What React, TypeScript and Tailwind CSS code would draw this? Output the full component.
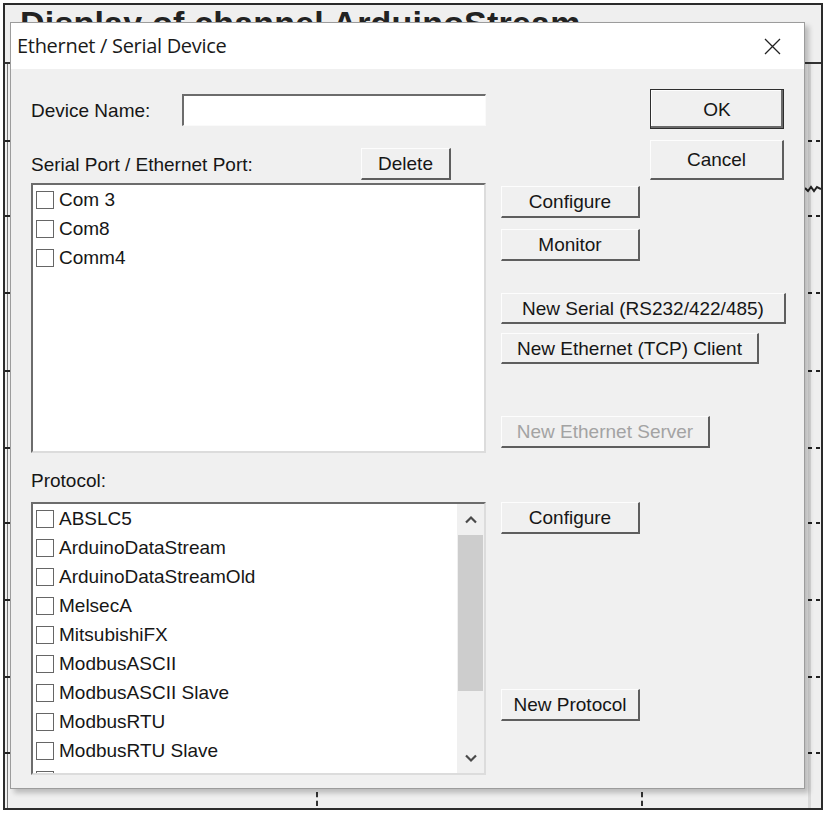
import * as React from "react";

const ticks = [140, 215, 292, 370, 447, 522, 599, 676, 752];

const ports = ["Com 3", "Com8", "Comm4"];

const protocols = [
  "ABSLC5",
  "ArduinoDataStream",
  "ArduinoDataStreamOld",
  "MelsecA",
  "MitsubishiFX",
  "ModbusASCII",
  "ModbusASCII Slave",
  "ModbusRTU",
  "ModbusRTU Slave",
  "ModbusTCP",
];

function Btn({
  children,
  className = "",
  disabled,
  isDefault,
}: {
  children: React.ReactNode;
  className?: string;
  disabled?: boolean;
  isDefault?: boolean;
}) {
  const edge = isDefault
    ? "border border-[#2e2e2e] shadow-[inset_-2px_-2px_0_#6a6a6a,inset_1px_1px_0_#fdfdfd]"
    : "border-t border-l border-t-[#fdfdfd] border-l-[#fdfdfd] border-b-2 border-r-2 border-b-[#5e5e5e] border-r-[#5e5e5e]";
  return (
    <div
      className={`flex shrink-0 items-center justify-center bg-[#f0f0f0] text-[19px] leading-none ${
        disabled ? "text-[#a3a3a3]" : "text-[#161616]"
      } ${edge} ${className}`}
    >
      {children}
    </div>
  );
}

function Row({ label }: { label: string }) {
  return (
    <div className="flex h-[29px] shrink-0 items-center pl-[3px]">
      <span className="h-[18px] w-[18px] shrink-0 border border-[#666] bg-white" />
      <span className="ml-[5px] whitespace-nowrap text-[19px] leading-none text-[#161616]">
        {label}
      </span>
    </div>
  );
}

function Chevron({ up }: { up?: boolean }) {
  return (
    <svg width="14" height="9" viewBox="0 0 14 9">
      <polyline
        points={up ? "2,7.5 7,2.5 12,7.5" : "2,1.5 7,6.5 12,1.5"}
        fill="none"
        stroke="#4a4a4a"
        strokeWidth="2.2"
      />
    </svg>
  );
}

export default function App() {
  return (
    <div className="relative h-[813px] w-[827px] overflow-hidden bg-white font-['Liberation_Sans',Arial,sans-serif]">
      {/* background window */}
      <div className="absolute left-[3px] top-[3px] h-[807px] w-[820px] border-2 border-[#2b2b2b] bg-[#efefef]">
        <div className="absolute left-[15px] top-[1px] whitespace-nowrap text-[34px] font-bold leading-none tracking-[0.2px] text-[#222]">
          Display of channel ArduinoStream
        </div>
        <div className="absolute left-0 right-0 top-[57px] h-[2px] bg-[#333]" />
        <div className="absolute bottom-0 left-[2px] top-[59px] w-px bg-[#777]" />
        <div className="absolute bottom-0 right-[10px] top-[59px] w-[3px] bg-[#d9d9d9]" />
        {ticks.map((t) => (
          <React.Fragment key={t}>
            <div className="absolute left-0 h-[2px] w-[5px] bg-[#222]" style={{ top: t - 5 }} />
            <div className="absolute right-[9px] h-[2px] w-[4px] bg-[#222]" style={{ top: t - 5 }} />
            <div className="absolute right-[1px] h-[2px] w-[4px] bg-[#222]" style={{ top: t - 5 }} />
          </React.Fragment>
        ))}
        <svg className="absolute right-0 top-[180px]" width="16" height="8" viewBox="0 0 16 8">
          <path d="M0 3 L3 6 L6 2 L9 6 L12 2 L16 4" fill="none" stroke="#222" strokeWidth="2" />
        </svg>
        <div className="absolute bottom-[2px] left-[311px] h-[14px] border-l-2 border-dashed border-[#333]" />
        <div className="absolute bottom-[2px] left-[636px] h-[14px] border-l-2 border-dashed border-[#333]" />
      </div>

      {/* dialog */}
      <div className="absolute left-[10px] top-[22px] flex h-[767px] w-[795px] flex-col border border-[#9c9c9c] bg-[#f0f0f0] shadow-[4px_4px_5px_rgba(0,0,0,0.22)]">
        <div className="flex h-[46px] shrink-0 items-center justify-between bg-white pl-[6px] pr-[23px]">
          <span className="font-['Open_Sans',sans-serif] text-[20px] tracking-[-0.3px] text-[#1a1a1a]">
            Ethernet / Serial Device
          </span>
          <svg width="17" height="17" viewBox="0 0 17 17">
            <path d="M1 1 L16 16 M16 1 L1 16" stroke="#222" strokeWidth="1.3" />
          </svg>
        </div>

        <div className="flex flex-col pl-[20px] pt-[20px] text-[19px] text-[#161616]">
          {/* top section */}
          <div className="flex items-start">
            <div className="flex w-[455px] flex-col">
              <div className="mt-[5px] flex h-[32px] items-center">
                <span className="w-[151px] leading-none">Device Name:</span>
                <div className="h-[32px] w-[304px] border-l-2 border-t-2 border-b border-r border-l-[#6c6c6c] border-t-[#6c6c6c] border-b-[#fafafa] border-r-[#fafafa] bg-white" />
              </div>
              <div className="mt-[22px] flex h-[32px] items-center">
                <span className="w-[330px] leading-none">Serial Port / Ethernet Port:</span>
                <Btn className="h-[32px] w-[90px]">Delete</Btn>
              </div>
            </div>
            <div className="ml-[164px] flex flex-col">
              <Btn isDefault className="h-[40px] w-[134px]">
                OK
              </Btn>
              <Btn className="mt-[11px] h-[40px] w-[134px]">Cancel</Btn>
            </div>
          </div>

          {/* ports */}
          <div className="mt-[3px] flex items-start">
            <div className="flex h-[270px] w-[455px] flex-col overflow-hidden border-l-2 border-t-2 border-b-2 border-r-2 border-l-[#6c6c6c] border-t-[#6c6c6c] border-b-[#dcdcdc] border-r-[#dcdcdc] bg-white">
              {ports.map((p) => (
                <Row key={p} label={p} />
              ))}
            </div>
            <div className="ml-[15px] flex flex-col">
              <Btn className="mt-[3px] h-[32px] w-[139px]">Configure</Btn>
              <Btn className="mt-[11px] h-[32px] w-[139px]">Monitor</Btn>
              <Btn className="mt-[32px] h-[31px] w-[285px]">New Serial (RS232/422/485)</Btn>
              <Btn className="mt-[9px] h-[31px] w-[258px]">New Ethernet (TCP) Client</Btn>
              <Btn disabled className="mt-[52px] h-[32px] w-[209px]">
                New Ethernet Server
              </Btn>
            </div>
          </div>

          <div className="mt-[17px] h-[22px] leading-[22px]">Protocol:</div>

          {/* protocols */}
          <div className="mt-[10px] flex items-start">
            <div className="flex h-[273px] w-[455px] overflow-hidden border-l-2 border-t-2 border-b-2 border-r-2 border-l-[#6c6c6c] border-t-[#6c6c6c] border-b-[#dcdcdc] border-r-[#dcdcdc] bg-white">
              <div className="flex min-w-0 flex-1 flex-col overflow-hidden">
                {protocols.map((p) => (
                  <Row key={p} label={p} />
                ))}
              </div>
              <div className="flex w-[27px] shrink-0 flex-col items-center bg-[#f0f0f0]">
                <div className="flex h-[30px] items-center justify-center">
                  <Chevron up />
                </div>
                <div className="mt-px h-[156px] w-[25px] bg-[#cdcdcd]" />
                <div className="flex-1" />
                <div className="flex h-[30px] items-center justify-center">
                  <Chevron />
                </div>
              </div>
            </div>
            <div className="ml-[15px] flex flex-col">
              <Btn className="h-[32px] w-[139px]">Configure</Btn>
              <Btn className="mt-[155px] h-[32px] w-[139px]">New Protocol</Btn>
            </div>
          </div>
        </div>
      </div>
    </div>
  );
}
